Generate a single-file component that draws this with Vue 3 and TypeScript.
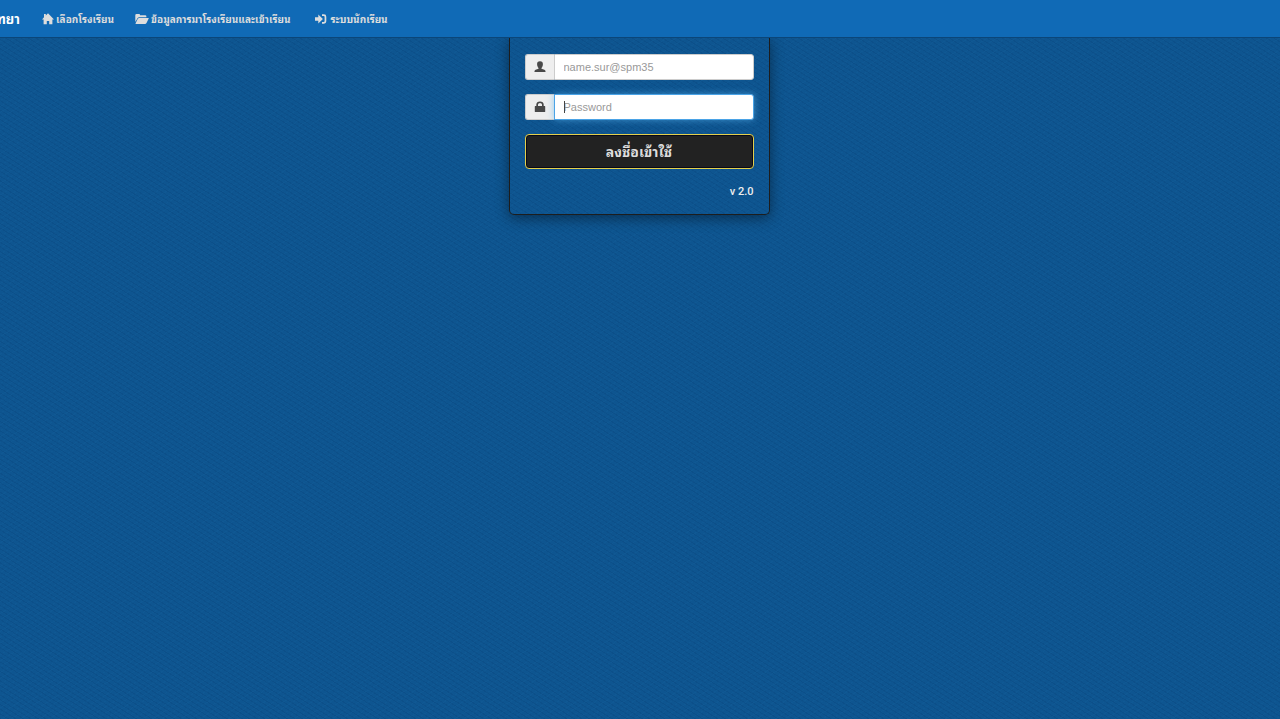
<script setup lang="ts">
import { onMounted, ref } from 'vue'

const username = ref('')
const password = ref('')
const passwordBox = ref<HTMLInputElement | null>(null)

onMounted(() => passwordBox.value?.focus())
</script>

<template>
  <div class="page">
    <nav class="navbar">
      <a class="brand" href="#">ทยา</a>
      <a class="link home" href="#">
        <svg class="icon" width="12" height="12" viewBox="0 0 12 12" aria-hidden="true">
          <path d="M6 .3 12 6.400H10.400V11.300H7.200V8H4.800V11.300H1.600V6.400H0L2 4.300V1h1.800v1.500z" />
        </svg>
        <span>เลือกโรงเรียน</span>
      </a>
      <a class="link data" href="#">
        <svg class="icon" width="14" height="12" viewBox="0 0 14 12" aria-hidden="true">
          <path d="M.3 9V2.200Q.3 1 1.500 1h2.700q.8 0 .8.900v.3h5.200q1.200 0 1.200 1.200v.8H4.200q-1 0-1.600.9z" />
          <path d="M4.200 4.900H13.300q.8 0 .4.700L11.500 10q-.5.900-1.500.9H1q-.8 0-.4-.7L2.800 5.800q.5-.9 1.400-.9z" />
        </svg>
        <span>ข้อมูลการมาโรงเรียนและเข้าเรียน</span>
      </a>
      <a class="link student" href="#">
        <svg class="icon" width="12" height="12" viewBox="0 0 12 12" aria-hidden="true">
          <path d="M0 4.200h3.300V1.600L7.900 6 3.300 10.400V7.800H0z" />
          <path d="M7 1.300h1.900q2.400 0 2.400 2.400v4.600q0 2.400-2.400 2.400H7V9h1.600q1 0 1-1V4q0-1-1-1H7z" />
        </svg>
        <span>ระบบนักเรียน</span>
      </a>
    </nav>

    <main>
      <form class="panel" @submit.prevent>
        <div class="group">
          <label class="addon" for="username" aria-label="name.sur@spm35">
            <svg width="12" height="12" viewBox="0 0 12 12" aria-hidden="true">
              <path d="M6 .3c2.100 0 3 1.300 2.900 3C8.800 4.900 8.400 6.100 7.500 6.900v.9l2.900.9q1.200.4 1.200 2.300H.4Q.4 9.100 1.600 8.700l2.900-.9v-.9C3.600 6.100 3.200 4.900 3.100 3.300 3 1.600 3.900.3 6 .3z" />
            </svg>
          </label>
          <input id="username" v-model="username" type="text" placeholder="name.sur@spm35" />
        </div>
        <div class="group">
          <label class="addon" for="password" aria-label="Password">
            <svg width="12" height="12" viewBox="0 0 12 12" aria-hidden="true">
              <path fill-rule="evenodd" d="M2.300 4.900V3.500Q2.500.4 6 .4t3.700 3.100V4.900h1q.5 0 .5.500V10.600q0 .5-.5.500H1.300Q.8 11.100.8 10.600V5.400Q.8 4.900 1.300 4.900zM4 4.900h4V3.600Q7.900 2 6 2T4 3.600z" />
            </svg>
          </label>
          <input id="password" ref="passwordBox" v-model="password" type="password" placeholder="Password" />
          <span v-if="!password" class="caret"></span>
        </div>
        <button class="submit" type="submit">ลงชื่อเข้าใช้</button>
        <p class="version">v 2.0</p>
      </form>
    </main>
  </div>
</template>

<style>
body {
  margin: 0;
  overflow: hidden;
}
</style>

<style scoped>
* {
  box-sizing: border-box;
}

.page {
  min-height: 100vh;
  font-family: "Liberation Sans", "Noto Sans Thai Looped", Loma, Waree, Garuda, "Noto Sans Thai", "Noto Sans", sans-serif;
  font-size: 11px;
  background-color: #0e5590;
  background-image:
    repeating-linear-gradient(32deg, rgba(0, 40, 90, 0.12) 0 1px, transparent 1px 4px),
    repeating-linear-gradient(148deg, rgba(30, 115, 175, 0.1) 0 1px, transparent 1px 5px);
}

.navbar {
  position: relative;
  z-index: 1;
  display: flex;
  align-items: center;
  height: 38px;
  background: #106ab6;
  border-bottom: 1px solid #0b4679;
  font-weight: bold;
  white-space: nowrap;
}

.brand {
  display: flex;
  justify-content: flex-end;
  flex: none;
  width: 20px;
  margin-right: 22px;
  color: #fff;
  font-size: 13px;
  text-decoration: none;
}

.link {
  display: flex;
  align-items: center;
  gap: 2px;
  color: #ddd;
  font-size: 10px;
  text-decoration: none;
}

.icon {
  flex: none;
  fill: currentColor;
}

.data {
  margin-left: 21px;
}

.student {
  gap: 4px;
  margin-left: 24px;
}

main {
  padding-right: 2px;
}

.panel {
  width: 261px;
  margin: 0 auto;
  padding: 16px 15px 15px;
  border: 1px solid #1d1d1d;
  border-top: 0;
  border-radius: 0 0 5px 5px;
  box-shadow: 0 3px 14px rgba(0, 0, 0, 0.45);
}

.group {
  position: relative;
  display: flex;
  height: 26px;
  margin-bottom: 14px;
}

.addon {
  display: flex;
  align-items: center;
  justify-content: center;
  width: 29px;
  border: 1px solid #ccc;
  border-right: 0;
  border-radius: 3px 0 0 3px;
  background: #eee;
  fill: #484848;
}

input {
  flex: 1;
  min-width: 0;
  padding: 0 9px;
  border: 1px solid #ccc;
  border-radius: 0 3px 3px 0;
  outline: 0;
  background: #fff;
  color: #555;
  font-family: inherit;
  font-size: 11px;
}

input::placeholder {
  color: #999;
  opacity: 1;
}

input:focus {
  border-color: #4aa3e6;
  box-shadow: 0 0 7px rgba(90, 180, 240, 0.6);
  caret-color: transparent;
}

.caret {
  position: absolute;
  top: 7px;
  left: 39px;
  width: 1px;
  height: 12px;
  background: #444;
}

.submit {
  display: block;
  width: 100%;
  height: 35px;
  padding: 0 0 2px;
  border: 1px solid #e3cf4c;
  border-radius: 4px;
  background: #222;
  box-shadow: inset 0 0 0 1px #080818;
  color: #ddd;
  font-family: inherit;
  font-size: 14px;
  font-weight: bold;
}

.version {
  margin: 16px 0 0;
  color: #eee;
  font-family: Roboto, sans-serif;
  font-size: 11px;
  font-weight: 500;
  line-height: 14px;
  text-align: right;
}
</style>
